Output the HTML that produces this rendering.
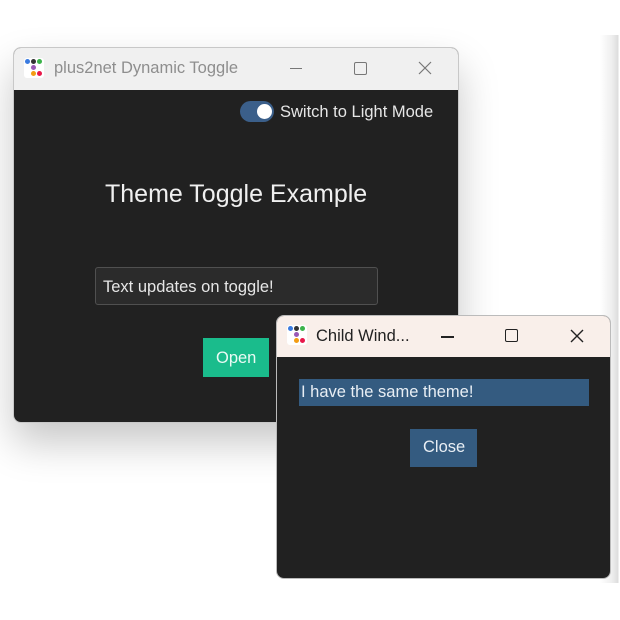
<!DOCTYPE html>
<html><head><meta charset="utf-8"><style>
*{margin:0;padding:0;box-sizing:border-box}
body{width:620px;height:620px;background:#fff;position:relative;overflow:hidden;font-family:"Liberation Sans",sans-serif}
.abs{position:absolute}
.win{position:absolute;border-radius:8px;overflow:hidden}
.tb{position:absolute;left:0;right:0;top:0}
.logo{position:absolute;width:20px;height:20px;background:#fff;border-radius:3px}
.logo i{position:absolute;width:5px;height:5px;border-radius:50%}
.t{position:absolute;white-space:nowrap}
</style></head><body>
<div class="abs" style="left:0;top:35px;width:620px;height:548px;background:linear-gradient(90deg,#fff 0,#fff 600px,#eee 612px,#ddd 618px,#fff 619px)"></div>
<!-- main window -->
<div class="win" style="left:13px;top:47px;width:446px;height:376px;background:#212121;border:1px solid #c8c8c8;box-shadow:0 20px 40px rgba(0,0,0,.22)">
 <div class="tb" style="height:42px;background:#f0f0f0"></div>
 <div class="logo" style="left:10px;top:10px">
  <i style="left:1px;top:1px;background:#3a7be0"></i><i style="left:7px;top:1px;background:#333"></i><i style="left:13px;top:1px;background:#3bb34a"></i>
  <i style="left:7px;top:7px;background:#9b59b6"></i>
  <i style="left:7px;top:13px;background:#f39c12"></i><i style="left:13px;top:13px;background:#e8184a"></i>
 </div>
 <div class="t" style="left:40px;top:11px;font-size:16.5px;color:#8e8e8e">plus2net Dynamic Toggle</div>
 <div class="abs" style="left:276px;top:20px;width:12px;height:1px;background:#777"></div>
 <div class="abs" style="left:340px;top:14px;width:13px;height:13px;border:1px solid #777;border-radius:2px"></div>
 <svg class="abs" style="left:404px;top:13px" width="14" height="14"><path d="M1 1L13 13M13 1L1 13" stroke="#777" stroke-width="1.2"/></svg>
 <div class="abs" style="left:226px;top:53px;width:34px;height:21px;border-radius:11px;background:#3b5f8a"></div>
 <div class="abs" style="left:243px;top:56px;width:15px;height:15px;border-radius:50%;background:#fff"></div>
 <div class="t" style="left:266px;top:55px;font-size:16.5px;color:#e6e6e6">Switch to Light Mode</div>
 <div class="t" style="left:91px;top:132px;font-size:25px;color:#f0f0f0">Theme Toggle Example</div>
 <div class="abs" style="left:81px;top:219px;width:283px;height:38px;background:#2b2b2b;border:1px solid #505050;border-radius:3px"></div>
 <div class="t" style="left:89px;top:230px;font-size:16.5px;color:#e6e6e6">Text updates on toggle!</div>
 <div class="abs" style="left:189px;top:290px;width:66px;height:39px;background:#1abc8c"></div>
 <div class="t" style="left:202px;top:301px;font-size:16.5px;color:#eafaf4">Open</div>
</div>
<!-- child window -->
<div class="win" style="left:276px;top:315px;width:335px;height:264px;background:#212121;border:1px solid #bbb">
 <div class="tb" style="height:41px;background:#f9efea"></div>
 <div class="logo" style="left:10px;top:9px">
  <i style="left:1px;top:1px;background:#3a7be0"></i><i style="left:7px;top:1px;background:#333"></i><i style="left:13px;top:1px;background:#3bb34a"></i>
  <i style="left:7px;top:7px;background:#9b59b6"></i>
  <i style="left:7px;top:13px;background:#f39c12"></i><i style="left:13px;top:13px;background:#e8184a"></i>
 </div>
 <div class="t" style="left:39px;top:11px;font-size:16.5px;color:#222">Child Wind...</div>
 <div class="abs" style="left:164px;top:20px;width:13px;height:1.5px;background:#222"></div>
 <div class="abs" style="left:228px;top:13px;width:13px;height:13px;border:1.5px solid #222;border-radius:2px"></div>
 <svg class="abs" style="left:293px;top:13px" width="14" height="14"><path d="M1 1L13 13M13 1L1 13" stroke="#222" stroke-width="1.4"/></svg>
 <div class="abs" style="left:22px;top:63px;width:290px;height:27px;background:#345b80"></div>
 <div class="t" style="left:24px;top:67px;font-size:16.5px;color:#e8eef4">I have the same theme!</div>
 <div class="abs" style="left:133px;top:113px;width:67px;height:38px;background:#345b80"></div>
 <div class="t" style="left:146px;top:122px;font-size:16.5px;color:#e8eef4">Close</div>
</div>
</body></html>
